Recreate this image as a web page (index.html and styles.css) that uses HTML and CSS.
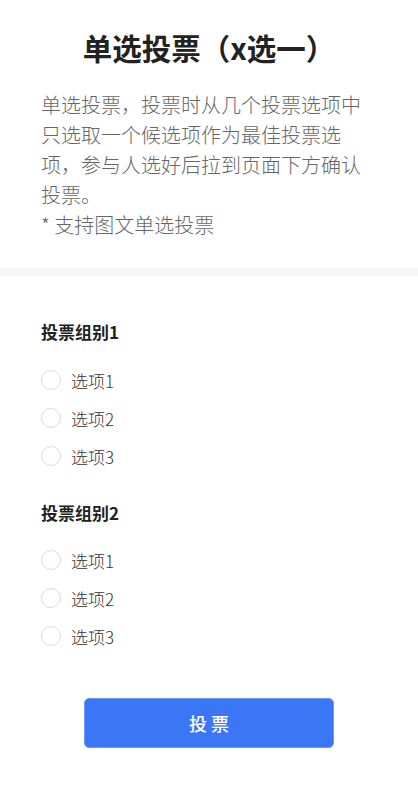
FILE: index.html
```html
<!DOCTYPE html>
<html lang="zh">
<head>
<meta charset="utf-8">
<link rel="stylesheet" href="styles.css">
</head>
<body>
<div class="intro">
  <h1 class="title">单选投票（x选一）</h1>
  <p class="desc">单选投票，投票时从几个投票选项中只选取一个候选项作为最佳投票选项，参与人选好后拉到页面下方确认投票。<br>* 支持图文单选投票</p>
</div>
<div class="sep"></div>
<div class="groups">
  <div class="group">
    <div class="group-title">投票组别1</div>
    <label class="opt"><span class="radio"></span><span class="opt-text">选项1</span></label>
    <label class="opt"><span class="radio"></span><span class="opt-text">选项2</span></label>
    <label class="opt"><span class="radio"></span><span class="opt-text">选项3</span></label>
  </div>
  <div class="group group2">
    <div class="group-title">投票组别2</div>
    <label class="opt"><span class="radio"></span><span class="opt-text">选项1</span></label>
    <label class="opt"><span class="radio"></span><span class="opt-text">选项2</span></label>
    <label class="opt"><span class="radio"></span><span class="opt-text">选项3</span></label>
  </div>
  <div class="actions"><button class="vote-btn">投票</button></div>
</div>
</body>
</html>
```
FILE: styles.css
```css
* { box-sizing: border-box; }
body {
  margin: 0;
  background: #fff;
  font-family: "Noto Sans CJK SC", "Noto Sans", sans-serif;
  color: #333;
}
.intro {
  padding: 26px 41px 28px;
}
.title {
  margin: 0;
  text-align: center;
  font-size: 29.5px;
  line-height: 42px;
  font-weight: 700;
  color: #222;
}
.desc {
  margin: 22px 0 0;
  font-size: 20px;
  line-height: 30px;
  font-weight: 300;
  color: #666;
}
.sep {
  height: 8px;
  background: #f5f6fa;
}
.groups {
  padding: 44px 41px 40px;
}
.group-title {
  font-size: 17px;
  line-height: 24px;
  font-weight: 700;
  color: #222;
  margin-bottom: 17px;
}
.group2 { margin-top: 26px; }
.group2 .group-title { margin-bottom: 16px; }
.opt {
  display: flex;
  align-items: center;
  height: 38px;
  gap: 10px;
}
.radio {
  width: 20px;
  height: 20px;
  border-radius: 50%;
  border: 1px solid #dcdcdc;
  background: #fff;
}
.opt-text {
  font-size: 17px;
  font-weight: 300;
  color: #333;
}
.actions {
  display: flex;
  justify-content: center;
  margin-top: 43px;
}
.vote-btn {
  width: 250px;
  height: 50px;
  border: 1px solid #6a9bf7;
  border-radius: 5px;
  background: #3b76f6;
  color: #fff;
  font-family: "Noto Sans CJK SC", sans-serif;
  font-size: 18px;
  font-weight: 500;
  letter-spacing: 4px;
  text-indent: 4px;
}
```
